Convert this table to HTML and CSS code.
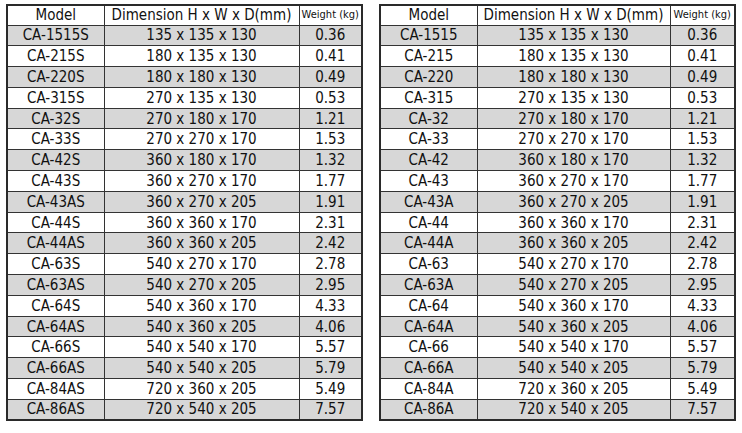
FILE: index.html
```html
<!DOCTYPE html>
<html>
<head>
<meta charset="utf-8">
<link rel="stylesheet" href="styles.css">
</head>
<body>
<div class="page">
  <table class="spec">
    <colgroup><col class="c-model"><col class="c-dim"><col class="c-wt"></colgroup>
    <thead>
      <tr><th>Model</th><th>Dimension H x W x D(mm)</th><th class="wt-head">Weight (kg)</th></tr>
    </thead>
    <tbody>
      <tr><td>CA-1515S</td><td>135 x 135 x 130</td><td>0.36</td></tr>
      <tr><td>CA-215S</td><td>180 x 135 x 130</td><td>0.41</td></tr>
      <tr><td>CA-220S</td><td>180 x 180 x 130</td><td>0.49</td></tr>
      <tr><td>CA-315S</td><td>270 x 135 x 130</td><td>0.53</td></tr>
      <tr><td>CA-32S</td><td>270 x 180 x 170</td><td>1.21</td></tr>
      <tr><td>CA-33S</td><td>270 x 270 x 170</td><td>1.53</td></tr>
      <tr><td>CA-42S</td><td>360 x 180 x 170</td><td>1.32</td></tr>
      <tr><td>CA-43S</td><td>360 x 270 x 170</td><td>1.77</td></tr>
      <tr><td>CA-43AS</td><td>360 x 270 x 205</td><td>1.91</td></tr>
      <tr><td>CA-44S</td><td>360 x 360 x 170</td><td>2.31</td></tr>
      <tr><td>CA-44AS</td><td>360 x 360 x 205</td><td>2.42</td></tr>
      <tr><td>CA-63S</td><td>540 x 270 x 170</td><td>2.78</td></tr>
      <tr><td>CA-63AS</td><td>540 x 270 x 205</td><td>2.95</td></tr>
      <tr><td>CA-64S</td><td>540 x 360 x 170</td><td>4.33</td></tr>
      <tr><td>CA-64AS</td><td>540 x 360 x 205</td><td>4.06</td></tr>
      <tr><td>CA-66S</td><td>540 x 540 x 170</td><td>5.57</td></tr>
      <tr><td>CA-66AS</td><td>540 x 540 x 205</td><td>5.79</td></tr>
      <tr><td>CA-84AS</td><td>720 x 360 x 205</td><td>5.49</td></tr>
      <tr><td>CA-86AS</td><td>720 x 540 x 205</td><td>7.57</td></tr>
    </tbody>
  </table>
  <table class="spec">
    <colgroup><col class="c-model"><col class="c-dim2"><col class="c-wt2"></colgroup>
    <thead>
      <tr><th>Model</th><th>Dimension H x W x D(mm)</th><th class="wt-head">Weight (kg)</th></tr>
    </thead>
    <tbody>
      <tr><td>CA-1515</td><td>135 x 135 x 130</td><td>0.36</td></tr>
      <tr><td>CA-215</td><td>180 x 135 x 130</td><td>0.41</td></tr>
      <tr><td>CA-220</td><td>180 x 180 x 130</td><td>0.49</td></tr>
      <tr><td>CA-315</td><td>270 x 135 x 130</td><td>0.53</td></tr>
      <tr><td>CA-32</td><td>270 x 180 x 170</td><td>1.21</td></tr>
      <tr><td>CA-33</td><td>270 x 270 x 170</td><td>1.53</td></tr>
      <tr><td>CA-42</td><td>360 x 180 x 170</td><td>1.32</td></tr>
      <tr><td>CA-43</td><td>360 x 270 x 170</td><td>1.77</td></tr>
      <tr><td>CA-43A</td><td>360 x 270 x 205</td><td>1.91</td></tr>
      <tr><td>CA-44</td><td>360 x 360 x 170</td><td>2.31</td></tr>
      <tr><td>CA-44A</td><td>360 x 360 x 205</td><td>2.42</td></tr>
      <tr><td>CA-63</td><td>540 x 270 x 170</td><td>2.78</td></tr>
      <tr><td>CA-63A</td><td>540 x 270 x 205</td><td>2.95</td></tr>
      <tr><td>CA-64</td><td>540 x 360 x 170</td><td>4.33</td></tr>
      <tr><td>CA-64A</td><td>540 x 360 x 205</td><td>4.06</td></tr>
      <tr><td>CA-66</td><td>540 x 540 x 170</td><td>5.57</td></tr>
      <tr><td>CA-66A</td><td>540 x 540 x 205</td><td>5.79</td></tr>
      <tr><td>CA-84A</td><td>720 x 360 x 205</td><td>5.49</td></tr>
      <tr><td>CA-86A</td><td>720 x 540 x 205</td><td>7.57</td></tr>
    </tbody>
  </table>
</div>
</body>
</html>
```

FILE: styles.css
```css
html, body {
  margin: 0;
  padding: 0;
  background: #ffffff;
}
.page {
  display: flex;
  gap: 16px;
  padding: 4px 0 0 6px;
  font-family: "DejaVu Sans Condensed", "DejaVu Sans", sans-serif;
  color: #111;
}
.spec {
  border-collapse: collapse;
  table-layout: fixed;
  width: 355px;
  border: 2px solid #2a2a2a;
}
.c-model { width: 97px; }
.c-dim { width: 195px; }
.c-wt { width: 63px; }
.c-dim2 { width: 193px; }
.c-wt2 { width: 65px; }
.spec th, .spec td {
  border: 1px solid #333;
  padding: 0;
  text-align: center;
  font-size: 15px;
  font-weight: normal;
  line-height: 18px;
  white-space: nowrap;
  overflow: hidden;
}
.spec thead tr { height: 20px; }
.spec tbody tr { height: 20.8px; }
.spec tbody tr:nth-child(odd) { background: #d7d7d7; }
.spec th.wt-head {
  font-size: 11px;
}
```
